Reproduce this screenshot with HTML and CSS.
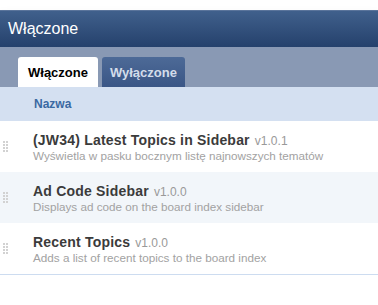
FILE: index.html
```html
<!DOCTYPE html>
<html lang="pl">
<head>
  <meta charset="UTF-8" />
  <title>Rozszerzenia</title>
  <link rel="stylesheet" href="styles.css">
</head>
<body>
  <div class="panel">
    <div class="panel-head">Włączone</div>

    <div class="tabs">
      <button class="tab active">Włączone</button>
      <button class="tab">Wyłączone</button>
    </div>

    <div class="table-head">Nazwa</div>

    <div class="ext-list">
      <div class="ext-row">
        <svg class="grip" width="8" height="12" viewBox="0 0 8 12"><g fill="#d2d2d2"><rect x="3" y="0" width="2" height="2"/><rect x="6" y="0" width="2" height="2"/><rect x="3" y="3" width="2" height="2"/><rect x="6" y="3" width="2" height="2"/><rect x="3" y="6" width="2" height="2"/><rect x="6" y="6" width="2" height="2"/><rect x="3" y="9" width="2" height="2"/><rect x="6" y="9" width="2" height="2"/></g></svg>
        <div class="ext-info">
          <div class="ext-title">(JW34) Latest Topics in Sidebar <span class="ext-ver">v1.0.1</span></div>
          <div class="ext-desc">Wyświetla w pasku bocznym listę najnowszych tematów</div>
        </div>
      </div>
      <div class="ext-row alt">
        <svg class="grip" width="8" height="12" viewBox="0 0 8 12"><g fill="#d2d2d2"><rect x="3" y="0" width="2" height="2"/><rect x="6" y="0" width="2" height="2"/><rect x="3" y="3" width="2" height="2"/><rect x="6" y="3" width="2" height="2"/><rect x="3" y="6" width="2" height="2"/><rect x="6" y="6" width="2" height="2"/><rect x="3" y="9" width="2" height="2"/><rect x="6" y="9" width="2" height="2"/></g></svg>
        <div class="ext-info">
          <div class="ext-title">Ad Code Sidebar <span class="ext-ver">v1.0.0</span></div>
          <div class="ext-desc">Displays ad code on the board index sidebar</div>
        </div>
      </div>
      <div class="ext-row">
        <svg class="grip" width="8" height="12" viewBox="0 0 8 12"><g fill="#d2d2d2"><rect x="3" y="0" width="2" height="2"/><rect x="6" y="0" width="2" height="2"/><rect x="3" y="3" width="2" height="2"/><rect x="6" y="3" width="2" height="2"/><rect x="3" y="6" width="2" height="2"/><rect x="6" y="6" width="2" height="2"/><rect x="3" y="9" width="2" height="2"/><rect x="6" y="9" width="2" height="2"/></g></svg>
        <div class="ext-info">
          <div class="ext-title">Recent Topics <span class="ext-ver">v1.0.0</span></div>
          <div class="ext-desc">Adds a list of recent topics to the board index</div>
        </div>
      </div>
    </div>
  </div>
</body>
</html>
```

FILE: styles.css
```css
body {
  margin: 0;
  padding-top: 10px;
  background-color: #fff;
  font-family: "Liberation Sans", Arial, sans-serif;
}

.panel {
  box-shadow: 0 4px 10px rgba(0, 0, 0, 0.06);
}

.panel-head {
  height: 37px;
  line-height: 36px;
  padding-left: 8px;
  font-size: 16px;
  color: #fff;
  background: linear-gradient(#40608c, #25416c);
  border-top: 1px solid #5a749b;
  box-sizing: border-box;
}

.tabs {
  display: flex;
  gap: 4px;
  height: 40px;
  padding: 10px 0 0 18px;
  box-sizing: border-box;
  background-color: #8999b4;
}

.tab {
  height: 30px;
  padding: 0 8px;
  border: none;
  border-radius: 3px 3px 0 0;
  font-family: inherit;
  font-size: 13px;
  font-weight: bold;
  color: #d3dcea;
  background: linear-gradient(#4d6a97, #3a5686);
}

.tab.active {
  padding: 0 10px;
  color: #000;
  background: #fff;
}

.table-head {
  height: 34px;
  line-height: 34px;
  padding-left: 34px;
  font-size: 12px;
  font-weight: bold;
  color: #3a69a2;
  background-color: #d4e0f1;
}

.ext-list {
  border-bottom: 1px solid #cddcf0;
}

.ext-row {
  display: flex;
  align-items: center;
  height: 51px;
  background-color: #fff;
}

.ext-row.alt {
  background-color: #f2f6fa;
}

.grip {
  flex-shrink: 0;
  margin: 1px 25px 0 0;
}

.ext-title {
  font-size: 14px;
  font-weight: bold;
  letter-spacing: 0.2px;
  color: #3b3b3b;
}

.ext-ver {
  margin-left: 1px;
  font-size: 12px;
  font-weight: normal;
  letter-spacing: 0;
  color: #999;
}

.ext-desc {
  margin-top: 1px;
  font-size: 11.7px;
  color: #a2a2a2;
}
```
